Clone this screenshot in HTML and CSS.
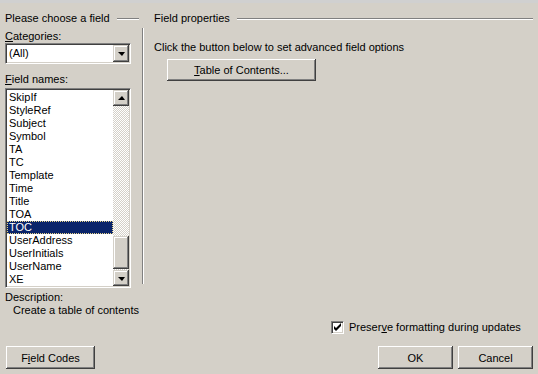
FILE: index.html
```html
<!DOCTYPE html>
<html lang="en">
<head>
  <meta charset="UTF-8" />
  <title>Field</title>
  <link rel="stylesheet" href="styles.css">
</head>
<body>
  <div class="strip"></div>
  <div class="main">
    <div class="left">
      <div class="group-head"><span>Please choose a field</span><div class="etch"></div></div>
      <div class="pick">
        <div class="pick-fields">
          <div class="label"><u>C</u>ategories:</div>
          <div class="combo">
            <div class="combo-text">(All)</div>
            <div class="sbtn"><span class="arrow-down"></span></div>
          </div>
          <div class="label names-label"><u>F</u>ield names:</div>
          <div class="listbox">
            <ul class="items">
              <li>SkipIf</li>
              <li>StyleRef</li>
              <li>Subject</li>
              <li>Symbol</li>
              <li>TA</li>
              <li>TC</li>
              <li>Template</li>
              <li>Time</li>
              <li>Title</li>
              <li>TOA</li>
              <li class="selected">TOC</li>
              <li>UserAddress</li>
              <li>UserInitials</li>
              <li>UserName</li>
              <li>XE</li>
            </ul>
            <div class="scrollbar">
              <div class="sbtn"><span class="arrow-up"></span></div>
              <div class="track">
                <div class="thumb"></div>
              </div>
              <div class="sbtn"><span class="arrow-down"></span></div>
            </div>
          </div>
        </div>
        <div class="vsep"></div>
      </div>
      <div class="label desc-label">Description:</div>
      <div class="label desc">Create a table of contents</div>
    </div>

    <div class="right">
      <div class="group-head"><span>Field properties</span><div class="etch"></div></div>
      <div class="label hint">Click the button below to set advanced field options</div>
      <button class="btn toc-btn"><u>T</u>able of Contents...</button>
    </div>
  </div>

  <div class="check-row">
    <span class="checkbox">
      <svg width="9" height="9" viewBox="0 0 9 9"><path d="M1 3v3l2 2 5-5V0L3 5z" fill="#000"/></svg>
    </span>
    <span class="label">Preser<u>v</u>e formatting during updates</span>
  </div>

  <div class="buttons">
    <button class="btn codes-btn">F<u>i</u>eld Codes</button>
    <div class="spacer"></div>
    <button class="btn">OK</button>
    <button class="btn">Cancel</button>
  </div>
</body>
</html>
```

FILE: styles.css
```css
body {
  margin: 0;
  width: 538px;
  height: 374px;
  overflow: hidden;
  background: #d4d0c8;
  font-family: "Liberation Sans", Arial, sans-serif;
  font-size: 11px;
  color: #000;
}
u {
  text-decoration: underline;
  text-underline-offset: 1px;
}
.strip {
  height: 3px;
  background: #d0d0d0;
}
.main {
  display: flex;
}
.label {
  line-height: 13px;
  height: 13px;
  white-space: nowrap;
}

/* group headers with etched line */
.group-head {
  display: flex;
  align-items: center;
  height: 13px;
  margin-top: 9px;
  line-height: 13px;
}
.etch {
  flex: 1;
  height: 0;
  margin-left: 7px;
  border-top: 1px solid #808080;
  border-bottom: 1px solid #fff;
}

/* left side */
.left {
  width: 134px;
  flex-shrink: 0;
  margin-left: 5px;
}
.pick {
  display: flex;
  margin-top: 1px;
}
.pick-fields {
  width: 126px;
  flex-shrink: 0;
}
.pick-fields > .label:first-child {
  margin-top: 4px;
}
.names-label {
  margin-top: 9px;
}
.vsep {
  width: 0;
  flex-shrink: 0;
  margin-left: 11px;
  margin-top: 2px;
  margin-bottom: 4px;
  border-left: 1px solid #808080;
  border-right: 1px solid #fff;
}
.combo,
.listbox {
  display: flex;
  background: #fff;
  border-style: solid;
  border-width: 1px;
  border-color: #808080 #fff #fff #808080;
  box-shadow: inset 1px 1px #404040, inset -1px -1px #d4d0c8;
  padding: 1px;
}
.combo {
  height: 17px;
}
.combo-text {
  flex: 1;
  line-height: 17px;
  padding-left: 2px;
}
.listbox {
  height: 196px;
  margin-top: 2px;
}
.items {
  flex: 1;
  list-style: none;
  margin: 0;
  padding: 0;
}
.items li {
  height: 13px;
  line-height: 13px;
  padding-left: 2px;
}
.items li:first-child {
  margin-top: 1px;
}
.items .selected {
  background: #0a246a;
  color: #fff;
  outline: 1px dotted #e8d48a;
  outline-offset: -1px;
}

/* scroll bar and arrow buttons */
.scrollbar {
  width: 16px;
  display: flex;
  flex-direction: column;
}
.sbtn {
  width: 16px;
  height: 16px;
  flex-shrink: 0;
  display: flex;
  align-items: center;
  justify-content: center;
  background: #d4d0c8;
  box-shadow: inset -1px -1px #404040, inset 1px 1px #d4d0c8, inset -2px -2px #808080, inset 2px 2px #fff;
}
.combo .sbtn {
  height: 17px;
}
.track {
  flex: 1;
  background: repeating-conic-gradient(#fff 0 25%, #d4d0c8 0 50%) 0 0 / 2px 2px;
  padding-top: 130px;
}
.thumb {
  height: 33px;
  background: #d4d0c8;
  box-shadow: inset -1px -1px #404040, inset 1px 1px #d4d0c8, inset -2px -2px #808080, inset 2px 2px #fff;
}
.arrow-down,
.arrow-up {
  width: 0;
  height: 0;
  border-left: 4px solid transparent;
  border-right: 3px solid transparent;
}
.arrow-down {
  border-top: 4px solid #000;
  margin-top: 1px;
}
.arrow-up {
  border-bottom: 4px solid #000;
  margin-top: -1px;
}
.desc-label {
  margin-top: 3px;
}
.desc {
  padding-left: 8px;
}

/* right side */
.right {
  flex: 1;
  margin-left: 15px;
  margin-right: 5px;
}
.hint {
  margin-top: 16px;
}
.btn {
  font-family: inherit;
  font-size: 11px;
  color: #000;
  height: 23px;
  width: 75px;
  padding: 0;
  border: none;
  background: #d4d0c8;
  box-shadow: inset -1px -1px #404040, inset 1px 1px #fff, inset -2px -2px #808080, inset 2px 2px #d4d0c8;
}
.toc-btn {
  display: block;
  width: 149px;
  height: 22px;
  margin-top: 5px;
  margin-left: 13px;
}

/* bottom */
.check-row {
  display: flex;
  align-items: center;
  margin-top: 4px;
  padding-left: 331px;
}
.checkbox {
  width: 11px;
  height: 11px;
  display: flex;
  align-items: center;
  justify-content: center;
  background: #fff;
  border-style: solid;
  border-width: 1px;
  border-color: #808080 #fff #fff #808080;
  box-shadow: inset 1px 1px #404040, inset -1px -1px #d4d0c8;
  margin-right: 5px;
}
.buttons {
  display: flex;
  gap: 5px;
  margin-top: 12px;
  padding: 0 5px 0 6px;
}
.codes-btn {
  width: 89px;
}
.spacer {
  flex: 1;
}
```
